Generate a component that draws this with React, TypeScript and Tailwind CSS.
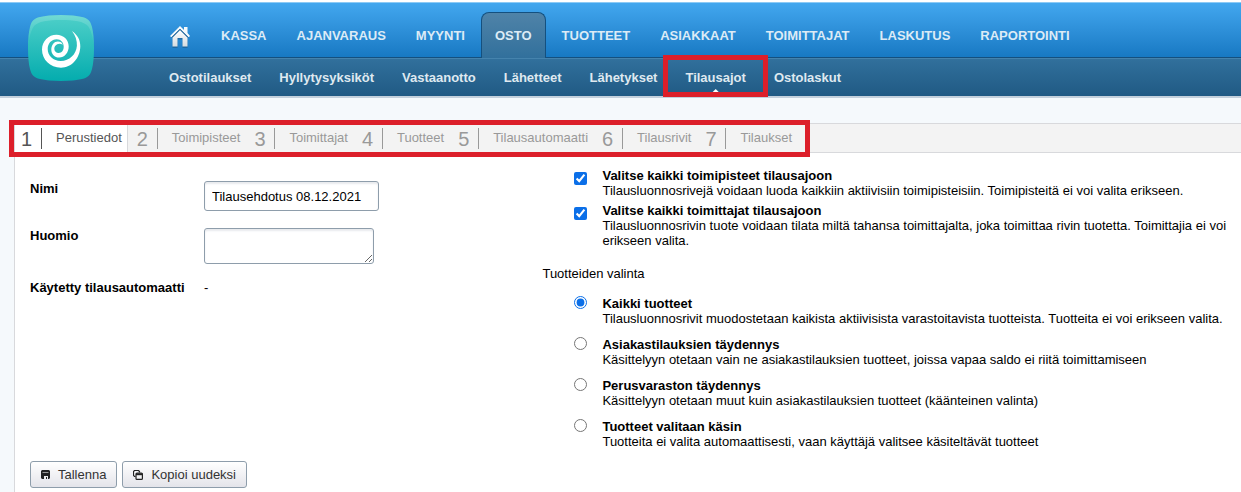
import type { ReactNode } from "react";

const mainNav = ["KASSA", "AJANVARAUS", "MYYNTI", "OSTO", "TUOTTEET", "ASIAKKAAT", "TOIMITTAJAT", "LASKUTUS", "RAPORTOINTI"];

const subNav = ["Ostotilaukset", "Hyllytysyksiköt", "Vastaanotto", "Lähetteet", "Lähetykset", "Tilausajot", "Ostolaskut"];

const steps = ["Perustiedot", "Toimipisteet", "Toimittajat", "Tuotteet", "Tilausautomaatti", "Tilausrivit", "Tilaukset"];

const scopeOptions = [
  {
    id: "toimipisteet",
    title: "Valitse kaikki toimipisteet tilausajoon",
    text: "Tilausluonnosrivejä voidaan luoda kaikkiin aktiivisiin toimipisteisiin. Toimipisteitä ei voi valita erikseen.",
  },
  {
    id: "toimittajat",
    title: "Valitse kaikki toimittajat tilausajoon",
    text: "Tilausluonnosrivin tuote voidaan tilata miltä tahansa toimittajalta, joka toimittaa rivin tuotetta. Toimittajia ei voi erikseen valita.",
  },
];

const productOptions = [
  {
    id: "kaikki",
    title: "Kaikki tuotteet",
    text: "Tilausluonnosrivit muodostetaan kaikista aktiivisista varastoitavista tuotteista. Tuotteita ei voi erikseen valita.",
  },
  {
    id: "asiakastilaukset",
    title: "Asiakastilauksien täydennys",
    text: "Käsittelyyn otetaan vain ne asiakastilauksien tuotteet, joissa vapaa saldo ei riitä toimittamiseen",
  },
  {
    id: "perusvarasto",
    title: "Perusvaraston täydennys",
    text: "Käsittelyyn otetaan muut kuin asiakastilauksien tuotteet (käänteinen valinta)",
  },
  {
    id: "kasin",
    title: "Tuotteet valitaan käsin",
    text: "Tuotteita ei valita automaattisesti, vaan käyttäjä valitsee käsiteltävät tuotteet",
  },
];

function Logo() {
  return (
    <svg viewBox="0 0 66 66" className="h-[66px] w-[66px]" aria-hidden="true">
      <defs>
        <linearGradient id="logo-fill" x1="0" y1="0" x2="0" y2="1">
          <stop offset="0" stopColor="#4fd0c9" />
          <stop offset="1" stopColor="#04acae" />
        </linearGradient>
        <linearGradient id="logo-shine" x1="0" y1="0" x2="0" y2="1">
          <stop offset="0" stopColor="#fff" stopOpacity="0.2" />
          <stop offset="1" stopColor="#fff" stopOpacity="0" />
        </linearGradient>
      </defs>
      <path
        d="M33 0C42 0 49 .7 54 2C60 3.500 62.500 6 64 12C65.300 17 66 24 66 33S65.300 49 64 54C62.500 60 60 62.500 54 64C49 65.300 42 66 33 66S17 65.300 12 64C6 62.500 3.500 60 2 54C.7 49 0 42 0 33S.7 17 2 12C3.500 6 6 3.500 12 2C17 .7 24 0 33 0Z"
        fill="url(#logo-fill)"
      />
      <path
        d="M0 33C0 24 .7 17 2 12C3.500 6 6 3.500 12 2C17 .7 24 0 33 0S49 .7 54 2C60 3.500 62.500 6 64 12C65.300 17 66 24 66 33C65 23 63 15 60 11C56 6.500 46 5 33 5S10 6.500 6 11C3 15 1 23 0 33Z"
        fill="url(#logo-shine)"
      />
      <path
        d="M44 16C49.500 20 52.500 25 52.300 31.500C52 43.500 43.500 52.700 33 52.700C22 52.700 14 44.500 14 34.500C14 26 20.500 19.700 28.500 19.700C35.500 19.700 40.700 24.700 40.700 31.200C40.700 37.800 36.500 42.500 31.200 42.500C26.500 42.500 23.300 39 23.300 34.700C23.300 30 26.300 26.500 29.800 26.500C32.300 26.500 34.200 27.700 34.800 29.800C33.200 28.600 31 28.300 29.200 29.200C27.200 30.200 26.300 32 26.300 33.800C26.300 36.300 28.200 38 30.600 38C33.700 38 35.700 35.300 35.700 31.800C35.700 27.500 32.800 24.200 28.700 24.200C23.500 24.200 19.700 28.500 19.700 34C19.700 40.700 25.400 46 32.700 46C41.500 46 48.200 39.500 48.900 30.800C49.200 25.500 47.400 20.500 44 16Z"
        fill="#fff"
      />
    </svg>
  );
}

function HomeIcon() {
  return (
    <svg viewBox="0 0 20 22" className="h-[22px] w-5" aria-hidden="true">
      <defs>
        <linearGradient id="home-fill" x1="0" y1="0" x2="0" y2="1">
          <stop offset="0" stopColor="#fff" />
          <stop offset="1" stopColor="#d5dbe0" />
        </linearGradient>
      </defs>
      <path d="M2.500 11.500L10 4L17.500 11.500V21H12.500V12.500H7.500V21H2.500Z" fill="#1b4f77" opacity="0.5" transform="translate(0 1)" />
      <path d="M2.500 11.500L10 4L17.500 11.500V20.500H12.500V12H7.500V20.500H2.500Z" fill="url(#home-fill)" />
      <path d="M10 0L14 4V1H17.500V7L20 10L18.700 11.200L10 2.800L1.300 11.200L0 10Z" fill="#f7fafc" />
      <path d="M1.800 11.600L10 3.400L18.200 11.600" fill="none" stroke="#2c5b80" strokeWidth="1" />
    </svg>
  );
}

function SaveIcon() {
  return (
    <svg viewBox="0 0 9 9" className="h-[9px] w-[9px]" aria-hidden="true">
      <path d="M1 0H8L9 1V8L8 9H1L0 8V1Z" fill="#222" />
      <path d="M1.500 2.500H7.500" stroke="#999" strokeWidth="1" />
      <path d="M3 6H7V9H6V7H5V9H3Z" fill="#eee" />
    </svg>
  );
}

function CopyIcon() {
  return (
    <svg viewBox="0 0 10 10" className="h-[10px] w-[10px]" aria-hidden="true">
      <path d="M2.500 6.500H1.500L.5 5.500V1.500L1.500 .5H5.500L6.500 1.500V2.500" fill="none" stroke="#222" strokeWidth="1.200" />
      <rect x="3" y="3" width="6.400" height="6.400" rx="1" fill="#f4f4f6" stroke="#222" strokeWidth="1.200" />
      <path d="M3 4.200H9.500" stroke="#222" strokeWidth="2" />
    </svg>
  );
}

type OptionProps = {
  type: "checkbox" | "radio";
  id: string;
  name: string;
  title: string;
  text: string;
  checked: boolean;
};

function Option({ type, id, name, title, text, checked }: OptionProps) {
  return (
    <div className="flex items-start gap-[15px]">
      <input
        type={type}
        id={id}
        name={name}
        defaultChecked={checked}
        className={
          type === "checkbox"
            ? "mt-1 h-[13px] w-[13px] shrink-0 accent-[#0b6fe8]"
            : "h-[13px] w-[13px] shrink-0 accent-[#0b6fe8]"
        }
      />
      <label htmlFor={id} className="leading-[15px]">
        <span className="block font-bold">{title}</span>
        <span className="block">{text}</span>
      </label>
    </div>
  );
}

function ActionButton({ icon, children }: { icon: ReactNode; children: ReactNode }) {
  return (
    <button
      type="button"
      className="flex h-[27px] items-center gap-2 rounded-[3px] border border-[#8e9dab] bg-gradient-to-b from-white to-[#e4e4ea] px-[10px] text-[#333]"
    >
      {icon}
      {children}
    </button>
  );
}

export default function App() {
  return (
    <div className="flex min-h-screen flex-col bg-[#f5f9fc] font-['Liberation_Sans',Arial,sans-serif] text-[13px] text-black">
      <header className="relative border-b-2 border-[#c3d0dc] bg-white pt-[2px]">
        <a href="#" aria-label="Etusivu" className="absolute top-[15px] left-7">
          <Logo />
        </a>
        <nav className="flex h-14 items-end border-t border-b border-t-[#8ccaf5] border-b-[#14507f] bg-gradient-to-b from-[#42a7ef] to-[#1779c3] pl-[170px] font-bold text-[#dcebf6]">
          <a href="#" aria-label="Koti" className="mr-4 mb-[9px]">
            <HomeIcon />
          </a>
          <ul className="flex">
            {mainNav.map((item) => (
              <li key={item}>
                <a
                  href="#"
                  className={
                    item === "OSTO"
                      ? "mx-px -mb-px block h-[46px] rounded-t-lg border border-b-0 border-[#14507f] bg-gradient-to-b from-[#4f83a8] to-[#31709c] px-[13px] leading-[46px]"
                      : "block h-[45px] border border-b-0 border-transparent px-[14px] leading-[46px]"
                  }
                >
                  {item}
                </a>
              </li>
            ))}
          </ul>
        </nav>
        <nav className="h-[38px] border-t border-[#4583ad] bg-gradient-to-b from-[#31709c] to-[#205a84] pl-[169px] font-bold text-[#dfe9f0]">
          <ul className="flex gap-7 leading-[38px]">
            {subNav.map((item) => (
              <li key={item} className="relative">
                <a href="#">{item}</a>
                {item === "Tilausajot" && (
                  <>
                    <span className="absolute bottom-1 left-1/2 -ml-1 h-1 w-2 bg-white [clip-path:polygon(50%_0,100%_100%,0_100%)]" />
                    <span className="absolute -inset-x-[22px] -top-1 bottom-0 border-[5px] border-[#dc1f2a]" />
                  </>
                )}
              </li>
            ))}
          </ul>
        </nav>
      </header>

      <main className="mt-[25px] ml-[14px] flex-1 border-t border-l border-[#d8d9dc] bg-white">
        <div className="border-b border-[#d8d9dc] bg-[#f3f3f3]">
          <ol className="relative flex w-fit text-[#999]">
            {steps.map((step, i) => (
              <li
                key={step}
                className={
                  i === 0
                    ? "flex h-7 items-center border-r border-[#d8d9dc] bg-white pr-[5px] pl-[6px] text-[#555]"
                    : "flex h-7 items-center pr-[5px] pl-[9px]"
                }
              >
                <span className="w-5 pt-px text-xl leading-7">{i + 1}</span>
                <a href="#" className="flex h-[21px] items-center border-l border-current pl-[14px]">
                  <span className="pb-px">{step}</span>
                </a>
              </li>
            ))}
            <li aria-hidden="true" className="absolute -top-1 -right-[13px] -bottom-[5px] -left-[6px] border-[5px] border-[#dc1f2a]" />
          </ol>
        </div>

        <form className="pr-[6px] pl-[15px]">
          <div className="grid grid-cols-[3fr_4fr]">
            <div className="grid grid-cols-[174px_1fr] content-start pt-7">
              <label htmlFor="nimi" className="leading-4 font-bold">
                Nimi
              </label>
              <input
                id="nimi"
                defaultValue="Tilausehdotus 08.12.2021"
                className="h-[30px] w-[175px] rounded-[3px] border border-[#8e9dab] px-[7px] shadow-[inset_0_2px_2px_#e8eaee]"
              />
              <label htmlFor="huomio" className="mt-[17px] leading-4 font-bold">
                Huomio
              </label>
              <textarea
                id="huomio"
                className="mt-[17px] h-9 w-[170px] rounded-[3px] border border-[#8e9dab] shadow-[inset_0_2px_2px_#e8eaee]"
              />
              <div className="mt-4 leading-4 font-bold">Käytetty tilausautomaatti</div>
              <div className="mt-4 leading-4">-</div>
            </div>

            <div className="-ml-1 pt-[15px]">
              <div className="flex flex-col gap-[5px] pl-8">
                {scopeOptions.map((option) => (
                  <Option key={option.id} type="checkbox" name={option.id} checked {...option} />
                ))}
              </div>
              <fieldset className="mt-[18px]">
                <legend className="leading-[15px]">Tuotteiden valinta</legend>
                <div className="mt-[15px] flex flex-col gap-[11px] pl-8">
                  {productOptions.map((option, i) => (
                    <Option key={option.id} type="radio" name="tuotteet" checked={i === 0} {...option} />
                  ))}
                </div>
              </fieldset>
            </div>
          </div>

          <div className="mt-3 flex gap-[5px]">
            <ActionButton icon={<SaveIcon />}>Tallenna</ActionButton>
            <ActionButton icon={<CopyIcon />}>Kopioi uudeksi</ActionButton>
          </div>
        </form>
      </main>
    </div>
  );
}
